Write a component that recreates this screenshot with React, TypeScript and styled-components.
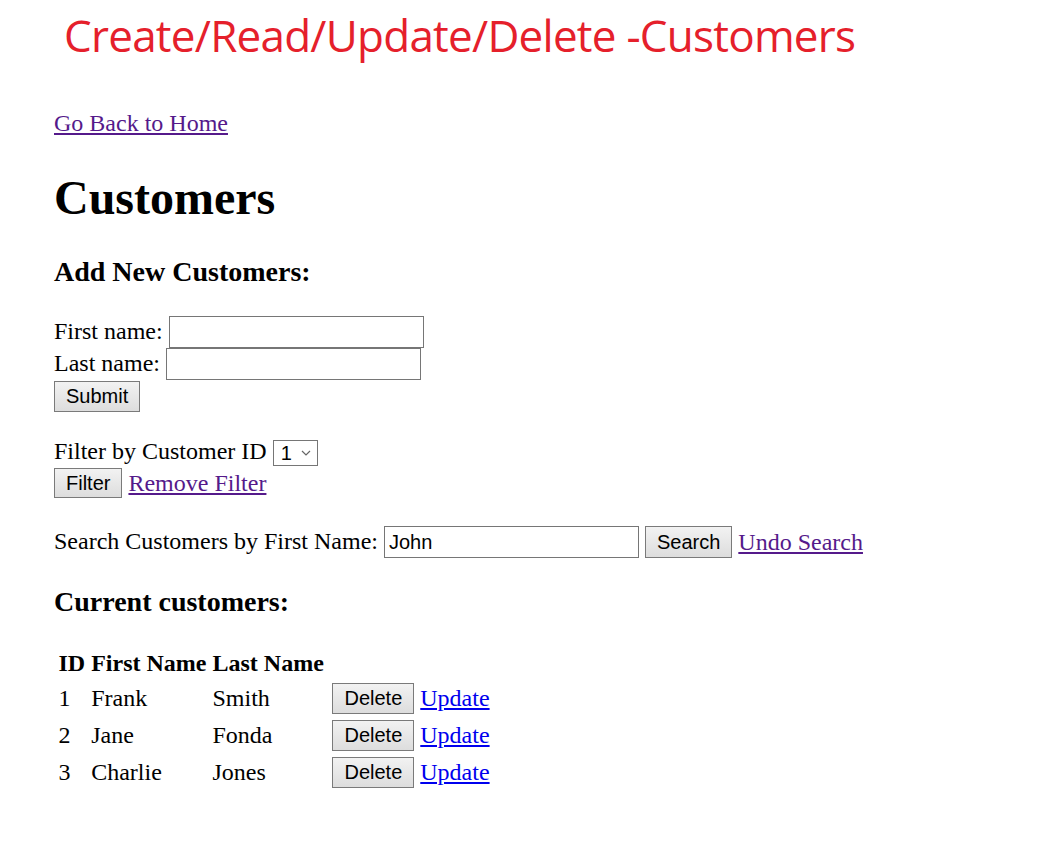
import React from "react";
import styled, { createGlobalStyle } from "styled-components";

const Global = createGlobalStyle`
  html, body { margin: 0; padding: 0; background: #ffffff; }
  body { font-family: "Liberation Serif", "Times New Roman", serif; font-size: 24px; color: #000; }
`;

const Page = styled.div`
  display: flex;
  flex-direction: column;
  align-items: flex-start;
  padding: 0 0 40px 54px;
`;

const Banner = styled.div`
  margin: 5px 0 0 10px;
  font-family: "Open Sans", "Noto Sans", sans-serif;
  font-size: 44px;
  line-height: 60px;
  letter-spacing: -0.75px;
  color: #e5202b;
  white-space: nowrap;
`;

const Link = styled.a<{ $visited?: boolean }>`
  color: ${(p) => (p.$visited ? "#551a8b" : "#0000ee")};
  text-decoration: underline;
  text-underline-offset: 2px;
  cursor: pointer;
  font-size: 24px;
  line-height: 27px;
`;

const NavLine = styled.div`
  margin-top: 45px;
  line-height: 27px;
`;

const Title = styled.h1`
  margin: 33px 0 0;
  font-size: 48px;
  line-height: 55px;
  font-weight: bold;
`;

const Heading = styled.h3<{ $gap: number }>`
  margin: ${(p) => p.$gap}px 0 0;
  font-size: 28px;
  line-height: 32px;
  font-weight: bold;
`;

const FieldRow = styled.div<{ $gap?: number; $h?: number }>`
  display: flex;
  align-items: center;
  gap: 6px;
  margin-top: ${(p) => p.$gap ?? 0}px;
  height: ${(p) => p.$h ?? 32}px;
  line-height: 27px;
  white-space: nowrap;
`;

const Label = styled.span`
  font-size: 24px;
  margin-bottom: 2px;
`;

const TextInput = styled.input`
  box-sizing: border-box;
  width: 255px;
  height: 32px;
  margin: 0;
  padding: 1px 4px;
  border: 1px solid #767676;
  border-radius: 0;
  font-family: "Liberation Sans", Arial, sans-serif;
  font-size: 20px;
  color: #000;
  background: #fff;
  outline: none;
`;

const Button = styled.button<{ $h?: number }>`
  box-sizing: border-box;
  height: ${(p) => p.$h ?? 31}px;
  margin: 0;
  padding: 0 11px;
  border: 1px solid #7a7a7a;
  border-radius: 0;
  background: linear-gradient(#f2f2f2, #dddddd);
  font-family: "Liberation Sans", Arial, sans-serif;
  font-size: 20px;
  color: #000;
  cursor: pointer;
`;

const SelectBox = styled.div`
  box-sizing: border-box;
  width: 45px;
  height: 26px;
  display: flex;
  align-items: center;
  justify-content: space-between;
  padding: 0 6px 0 7px;
  border: 1px solid #767676;
  background: #fff;
  font-family: "Liberation Sans", Arial, sans-serif;
  font-size: 20px;
  line-height: 24px;
`;

const Table = styled.table`
  margin-top: 27px;
  border-collapse: separate;
  border-spacing: 3px;
  font-size: 24px;
`;

const Th = styled.th`
  padding: 1.5px;
  text-align: left;
  font-weight: bold;
  line-height: 27px;
  white-space: nowrap;
`;

const Td = styled.td<{ $w?: number }>`
  padding: 1.5px;
  line-height: 27px;
  white-space: nowrap;
  vertical-align: middle;
  width: ${(p) => (p.$w ? `${p.$w}px` : "auto")};
`;

const Actions = styled.div`
  display: flex;
  align-items: center;
  gap: 6px;
`;

const Chevron = () => (
  <svg width="10" height="6" viewBox="0 0 10 6">
    <path d="M1 1 L5 5 L9 1" fill="none" stroke="#666" strokeWidth="1.2" />
  </svg>
);

const customers = [
  { id: 1, first: "Frank", last: "Smith" },
  { id: 2, first: "Jane", last: "Fonda" },
  { id: 3, first: "Charlie", last: "Jones" },
];

export default function App() {
  return (
    <>
      <Global />
      <Page>
        <Banner>Create/Read/Update/Delete -Customers</Banner>
        <NavLine>
          <Link $visited>Go Back to Home</Link>
        </NavLine>
        <Title>Customers</Title>
        <Heading $gap={31}>Add New Customers:</Heading>
        <FieldRow $gap={28}>
          <Label>First name:</Label>
          <TextInput defaultValue="" />
        </FieldRow>
        <FieldRow>
          <Label>Last name:</Label>
          <TextInput defaultValue="" />
        </FieldRow>
        <FieldRow $gap={1} $h={31}>
          <Button $h={31}>Submit</Button>
        </FieldRow>
        <FieldRow $gap={27} $h={27}>
          <Label>Filter by Customer ID</Label>
          <SelectBox>
            <span>1</span>
            <Chevron />
          </SelectBox>
        </FieldRow>
        <FieldRow $gap={2} $h={30}>
          <Button $h={30}>Filter</Button>
          <Link $visited>Remove Filter</Link>
        </FieldRow>
        <FieldRow $gap={28}>
          <Label>Search Customers by First Name:</Label>
          <TextInput defaultValue="John" />
          <Button $h={32}>Search</Button>
          <Link $visited>Undo Search</Link>
        </FieldRow>
        <Heading $gap={28}>Current customers:</Heading>
        <Table>
          <thead>
            <tr>
              <Th>ID</Th>
              <Th>First Name</Th>
              <Th>Last Name</Th>
              <Th />
            </tr>
          </thead>
          <tbody>
            {customers.map((c) => (
              <tr key={c.id}>
                <Td>{c.id}</Td>
                <Td>{c.first}</Td>
                <Td $w={114}>{c.last}</Td>
                <Td>
                  <Actions>
                    <Button $h={31}>Delete</Button>
                    <Link>Update</Link>
                  </Actions>
                </Td>
              </tr>
            ))}
          </tbody>
        </Table>
      </Page>
    </>
  );
}
